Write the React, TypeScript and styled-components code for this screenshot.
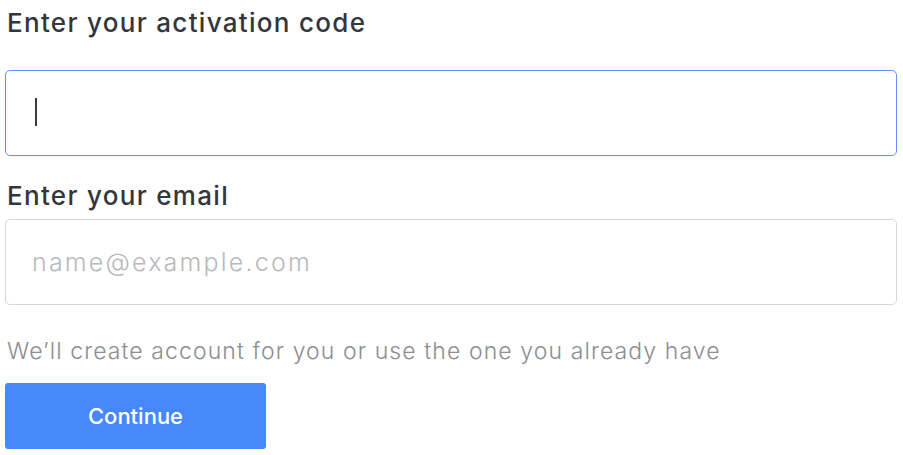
import React from "react";
import styled, { createGlobalStyle } from "styled-components";

const Global = createGlobalStyle`
  html, body { margin: 0; padding: 0; background: #ffffff; }
  body { font-family: "Inter", "Liberation Sans", sans-serif; }
  * { box-sizing: border-box; }
`;

const Form = styled.form`
  display: flex;
  flex-direction: column;
  align-items: flex-start;
  width: 892px;
  margin-left: 5px;
  padding-top: 7px;
`;

const Label = styled.label<{ $gap: number; $top?: number }>`
  display: block;
  font-size: 26px;
  line-height: 1.2;
  font-weight: 500;
  letter-spacing: 1.3px;
  color: #33363b;
  padding-left: 2px;
  margin-top: ${(p) => p.$top ?? 0}px;
  margin-bottom: ${(p) => p.$gap}px;
`;

const Field = styled.div<{ $focused?: boolean }>`
  position: relative;
  display: flex;
  align-items: center;
  width: 100%;
  height: 86px;
  padding: 0 26px;
  border: 1.5px solid ${(p) => (p.$focused ? "#5f95f6" : "#d8d9dc")};
  border-radius: 5px;
  background: #fff;
`;

const Input = styled.input`
  flex: 1;
  border: none;
  outline: none;
  background: transparent;
  font-family: "Inter", "Liberation Sans", sans-serif;
  font-size: 25px;
  font-weight: 400;
  letter-spacing: 2.2px;
  color: #33363b;
  caret-color: transparent;
  padding: 0;
  &::placeholder {
    color: #b7b9bd;
    font-weight: 300;
  }
`;

const Caret = styled.span`
  position: absolute;
  left: 29px;
  top: 27px;
  width: 2px;
  height: 28px;
  background: #3a3d42;
`;

const Hint = styled.p`
  margin: 33px 0 0 0;
  padding-left: 2px;
  font-size: 23px;
  line-height: 1.2;
  font-weight: 300;
  letter-spacing: 1.1px;
  color: #8b8d91;
`;

const Button = styled.button`
  margin-top: 17px;
  width: 261px;
  height: 66px;
  border: none;
  border-radius: 3px;
  background: #4588fb;
  color: #ffffff;
  font-family: "Inter", "Liberation Sans", sans-serif;
  font-size: 22px;
  font-weight: 500;
  cursor: pointer;
`;

export default function App() {
  return (
    <>
      <Global />
      <Form onSubmit={(e) => e.preventDefault()}>
        <Label htmlFor="code" $gap={32}>Enter your activation code</Label>
        <Field $focused>
          <Input id="code" type="text" />
          <Caret />
        </Field>
        <Label htmlFor="email" $top={24} $gap={8}>Enter your email</Label>
        <Field>
          <Input id="email" type="email" placeholder="name@example.com" />
        </Field>
        <Hint>We’ll create account for you or use the one you already have</Hint>
        <Button type="submit">Continue</Button>
      </Form>
    </>
  );
}
